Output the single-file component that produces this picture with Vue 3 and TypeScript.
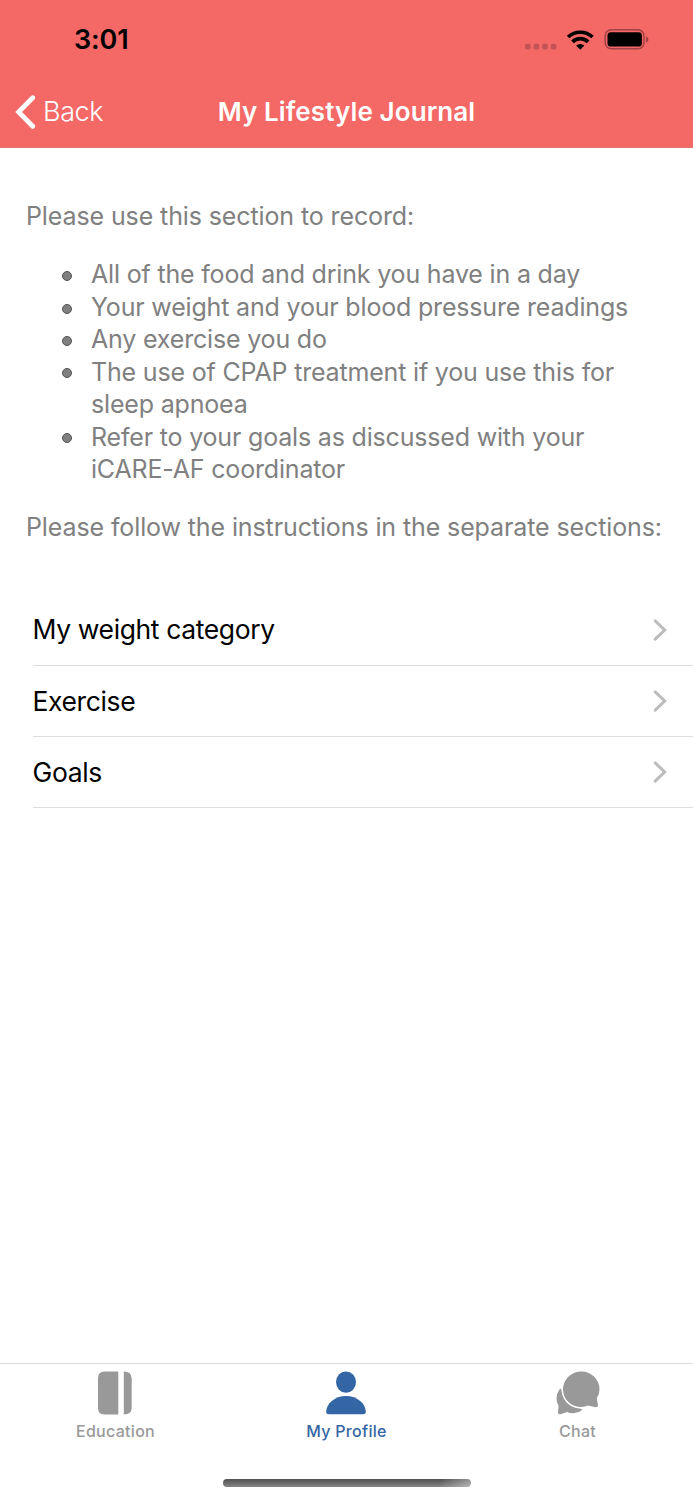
<script setup lang="ts">
interface JournalSection {
  id: string
  label: string
}

const reminders: string[][] = [
  ['All of the food and drink you have in a day'],
  ['Your weight and your blood pressure readings'],
  ['Any exercise you do'],
  ['The use of CPAP treatment if you use this for', 'sleep apnoea'],
  ['Refer to your goals as discussed with your', 'iCARE-AF coordinator'],
]

const sections: JournalSection[] = [
  { id: 'weight', label: 'My weight category' },
  { id: 'exercise', label: 'Exercise' },
  { id: 'goals', label: 'Goals' },
]
</script>

<template>
  <div class="screen">
    <header class="top">
      <div class="status">
        <span class="time">3:01</span>
        <svg class="indicators" width="126" height="24" viewBox="0 -4 126 24">
          <g fill="#c45254">
            <rect x="1" y="11.8" width="5.6" height="5.6" rx="1.6" />
            <rect x="9.6" y="11.8" width="5.6" height="5.6" rx="1.6" />
            <rect x="18.2" y="11.8" width="5.6" height="5.6" rx="1.6" />
            <rect x="26.8" y="11.8" width="5.6" height="5.6" rx="1.6" />
          </g>
          <g fill="none" stroke="#000" stroke-width="3.7">
            <path d="M44.1 5A18 18 0 0 1 68.5 5" />
            <path d="M48.5 9.8A11.3 11.3 0 0 1 64.1 9.8" />
          </g>
          <path d="M52.2 13.6A5.9 5.9 0 0 1 60.4 13.6L56.3 17.8Z" fill="#000" />
          <rect x="81.2" y="-2.2" width="38.8" height="19" rx="6" fill="none" stroke="#a14345" stroke-width="1.5" />
          <rect x="83.5" y="0.2" width="34.4" height="14.4" rx="3.4" fill="#000" />
          <path d="M122 4.4c1.7.6 2.4 1.8 2.4 3s-.7 2.4-2.4 3z" fill="#a14345" />
        </svg>
      </div>
      <nav class="nav">
        <button class="back" type="button">
          <svg width="22" height="36" viewBox="0 0 22 36">
            <path d="M18.7 3.7L4.6 18L18.7 32.3" fill="none" stroke="#fff" stroke-width="4.8" stroke-linecap="round" stroke-linejoin="miter" />
          </svg>
          <span class="back-label">Back</span>
        </button>
        <h1 class="title">My Lifestyle Journal</h1>
        <span></span>
      </nav>
    </header>

    <main class="content">
      <section class="intro">
        <p class="lead">Please use this section to record:</p>
        <ul class="reminders">
          <li v-for="(lines, index) in reminders" :key="index">
            <span v-for="line in lines" :key="line" class="line">{{ line }}</span>
          </li>
        </ul>
        <p class="lead">Please follow the instructions in the separate sections:</p>
      </section>

      <div class="sections">
        <a v-for="section in sections" :key="section.id" class="row">
          <span class="row-label">{{ section.label }}</span>
          <svg width="16" height="24" viewBox="0 0 16 24">
            <path d="M3.2 2.8L12.7 12L3.2 21.2" fill="none" stroke="#bcbcbc" stroke-width="3" stroke-linecap="round" />
          </svg>
        </a>
      </div>
    </main>

    <footer class="bottom">
      <div class="tabs">
        <a class="tab">
          <svg width="46" height="46" viewBox="0 0 46 46" fill="#999">
            <path d="M12.3 1.5H26.3V44.5H12.3Q6 44.5 6 38V8Q6 1.5 12.3 1.5Z" />
            <path d="M31.8 1.5Q39.7 1.5 39.7 8.5V37.5Q39.7 44.5 31.8 44.5Z" />
          </svg>
          <span>Education</span>
        </a>
        <a class="tab active">
          <svg width="46" height="46" viewBox="0 0 46 46" fill="#3465a4">
            <ellipse cx="23" cy="12.1" rx="10" ry="10.7" />
            <path d="M23 26C11.5 26 3.200 34 3.2 41.8Q3.2 44.3 6 44.3H40Q42.8 44.3 42.8 41.8C42.8 34 34.5 26 23 26Z" />
          </svg>
          <span>My Profile</span>
        </a>
        <a class="tab">
          <svg width="46" height="46" viewBox="0 0 46 46" fill="#999">
            <path d="M5.4 19.5Q2.500 23.500 2.500 28.500Q2.500 32.500 4.600 36L4 42.500Q4 44.700 6.300 44.200L13.200 42.100Q16 43.500 19.500 43.300Q25 42.800 27.900 40.200Q28.500 38.800 26.500 38.700Q15 37.600 10.400 29.500Q7.500 24.500 7.400 20Q6.800 18 5.400 19.500Z" />
            <path d="M27.300 1.400A18.200 18.200 0 0 0 9 19.200C9 29.500 17.500 37 27.300 37Q31 37 33.900 35.600L41.500 37.200Q44.100 37.200 43.900 35L42.800 28.300Q45.500 24.500 45.500 19.200A18.200 18.200 0 0 0 27.300 1.400Z" />
          </svg>
          <span>Chat</span>
        </a>
      </div>
      <div class="home-indicator"></div>
    </footer>
  </div>
</template>

<style>
body {
  margin: 0;
}
</style>

<style scoped>
.screen {
  box-sizing: border-box;
  display: flex;
  flex-direction: column;
  width: 693px;
  height: 1500px;
  overflow: hidden;
  background: #fff;
  color: #000;
  font-family: Inter, "Liberation Sans", sans-serif;
}

.top {
  box-sizing: border-box;
  height: 148px;
  background: #f46866;
  border-bottom: 1px solid #e77272;
}

.status {
  display: flex;
  align-items: center;
  justify-content: space-between;
  height: 74px;
  padding: 6px 43px 0 74px;
  box-sizing: border-box;
}

.time {
  font-size: 27px;
  font-weight: 600;
  line-height: 32px;
  letter-spacing: -0.1px;
}

.indicators {
  overflow: visible;
}

.nav {
  display: grid;
  grid-template-columns: 1fr auto 1fr;
  align-items: center;
  height: 73px;
  padding: 2px 14px 0;
  box-sizing: border-box;
  color: #fff;
}

.back {
  display: flex;
  align-items: center;
  gap: 7px;
  padding: 0;
  border: 0;
  background: none;
  color: inherit;
  font: inherit;
}

.back-label {
  font-size: 27px;
  line-height: 32px;
  letter-spacing: -0.4px;
  font-weight: 300;
}

.title {
  margin: 0;
  font-size: 26px;
  font-weight: 600;
  line-height: 32px;
  letter-spacing: 0.1px;
}

.content {
  flex: 1;
}

.intro {
  padding: 52.4px 0 0 26px;
  color: #808080;
  font-size: 25px;
  line-height: 32.4px;
}

.lead {
  margin: 0;
  white-space: nowrap;
  letter-spacing: -0.11px;
}

.reminders {
  margin: 25.7px 0;
  padding: 0 0 0 65px;
  list-style: none;
  letter-spacing: -0.18px;
}

.reminders li {
  position: relative;
}

.reminders li::before {
  content: "";
  position: absolute;
  top: 12.7px;
  left: -29px;
  box-sizing: border-box;
  width: 10px;
  height: 10px;
  border: 1.5px solid #545454;
  border-radius: 50%;
  background: #808080;
}

.line {
  display: block;
  white-space: nowrap;
}

.sections {
  padding: 51.3px 0 0 32.5px;
}

.row {
  display: flex;
  align-items: center;
  justify-content: space-between;
  box-sizing: border-box;
  height: 71.2px;
  padding-right: 25px;
  border-bottom: 1px solid #dedede;
  font-size: 26.5px;
}

.row-label {
  margin-top: -1px;
  letter-spacing: -0.38px;
}

.bottom {
  box-sizing: border-box;
  height: 137px;
  border-top: 1px solid #dedede;
}

.tabs {
  display: grid;
  grid-template-columns: repeat(3, 1fr);
  padding-top: 6px;
}

.tab {
  display: flex;
  flex-direction: column;
  align-items: center;
  color: #999;
  font-size: 16px;
  font-weight: 500;
  line-height: 20px;
  letter-spacing: 0.3px;
}

.tab svg {
  margin-left: -1.4px;
}

.tab span {
  margin-top: 5px;
}

.active {
  color: #3465a4;
}

.home-indicator {
  width: 248px;
  height: 8px;
  margin: 38px auto 0;
  border-radius: 4px;
  background: linear-gradient(105deg, transparent 87%, rgba(255, 255, 255, 0.4) 100%), linear-gradient(#505050, #858585);
}
</style>
